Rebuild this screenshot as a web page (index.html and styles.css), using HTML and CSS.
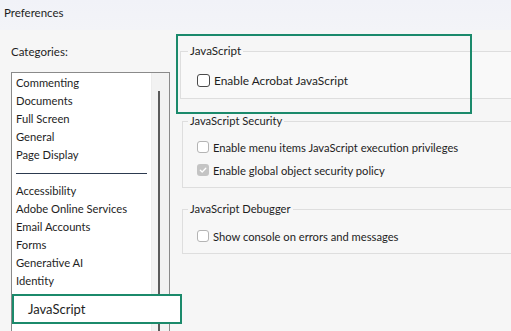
FILE: index.html
```html
<!DOCTYPE html>
<html>
<head>
<meta charset="utf-8">
<link rel="stylesheet" href="styles.css">
</head>
<body>
<div class="window">
  <header class="titlebar">Preferences</header>
  <div class="content">
    <aside class="sidebar">
      <div class="cat-label">Categories:</div>
      <div class="listbox">
        <ul class="list">
          <li>Commenting</li>
          <li>Documents</li>
          <li>Full Screen</li>
          <li>General</li>
          <li>Page Display</li>
          <li class="sep"><span></span></li>
          <li>Accessibility</li>
          <li>Adobe Online Services</li>
          <li>Email Accounts</li>
          <li>Forms</li>
          <li>Generative AI</li>
          <li>Identity</li>
        </ul>
        <div class="track"><div class="thumb"></div></div>
      </div>
    </aside>
    <main class="panel">
      <fieldset class="group g1">
        <legend>JavaScript</legend>
        <div class="row"><span class="cb"></span>Enable Acrobat JavaScript</div>
      </fieldset>
      <fieldset class="group g2">
        <legend>JavaScript Security</legend>
        <div class="row"><span class="cb light"></span>Enable menu items JavaScript execution privileges</div>
        <div class="row"><span class="cb checked"><svg viewBox="0 0 12 12" width="12" height="12"><path d="M3.3 6.2 L5.2 8 L8.8 4.3" fill="none" stroke="#fff" stroke-width="1.3" stroke-linecap="round" stroke-linejoin="round"/></svg></span>Enable global object security policy</div>
      </fieldset>
      <fieldset class="group g3">
        <legend>JavaScript Debugger</legend>
        <div class="row"><span class="cb light"></span>Show console on errors and messages</div>
      </fieldset>
    </main>
  </div>
  <div class="hl hl-item">JavaScript</div>
  <div class="hl hl-group"></div>
</div>
</body>
</html>
```
FILE: styles.css
```css
html, body {
  margin: 0;
  padding: 0;
}
body {
  width: 511px;
  height: 331px;
  overflow: hidden;
  background: #f6f6f6;
  font-family: Lato, "Noto Sans", sans-serif;
  font-size: 11.2px;
  color: #1e1e1e;
}
.window {
  position: relative;
  width: 511px;
  height: 331px;
  overflow: hidden;
}
.titlebar {
  height: 30px;
  box-sizing: border-box;
  padding: 6px 0 0 4px;
  line-height: 14px;
  font-size: 11.5px;
  background: linear-gradient(#f1f2f8, #f3f4f8);
}
.content {
  display: flex;
}
.sidebar {
  width: 176px;
  flex: none;
  padding-left: 11px;
  box-sizing: border-box;
}
.cat-label {
  margin-top: 15px;
  line-height: 14px;
  height: 14px;
  font-size: 11.5px;
}
.listbox {
  margin-top: 13px;
  width: 159px;
  height: 280px;
  box-sizing: border-box;
  border: 1px solid #8a8a8a;
  border-bottom: none;
  display: flex;
  background: #fff;
}
.list {
  list-style: none;
  margin: 0;
  padding: 1px 0 0 4px;
  flex: 1;
}
.list li {
  height: 18px;
  line-height: 18px;
  white-space: nowrap;
}
.list li.sep {
  display: flex;
  align-items: center;
}
.list li.sep span {
  display: block;
  width: 131px;
  height: 1px;
  background: #2c3a4f;
}
.track {
  width: 17px;
  flex: none;
  background: #f2f2f2;
  border-left: 1px solid #ececec;
}
.thumb {
  margin: 18px 0 0 6px;
  width: 2px;
  height: 240px;
  background: #5a5a5a;
}
.panel {
  flex: 1;
  padding-top: 14px;
  margin-right: -20px;
}
.group {
  margin: 0 0 0 6px;
  padding: 0 0 8px 0;
  border: 1px solid #dedede;
  background: #f7f7f7;
  min-width: 0;
}
.group.g1 {
  margin-left: 4px;
  padding-bottom: 9px;
  background: #f9f9f9;
}
.group.g2 {
  margin-top: 15px;
}
.group.g3 {
  margin-top: 14px;
}
.group legend {
  margin-left: 5px;
  padding: 0 2px;
  line-height: 14px;
  height: 14px;
}
.g1 legend {
  margin-left: 7px;
  font-size: 11.6px;
}
.row {
  display: flex;
  align-items: center;
  height: 18px;
  margin-left: 14px;
  white-space: nowrap;
}
.g1 .row { margin-top: 13px; margin-left: 16px; font-size: 11.9px; }
.g2 .row { margin-top: 5px; }
.g2 .row:first-of-type { margin-top: 10px; }
.g3 .row { margin-top: 11px; }
.cb {
  width: 13px;
  height: 13px;
  box-sizing: border-box;
  border: 1px solid #4a4a4a;
  border-radius: 3px;
  background: #fff;
  margin-right: 4px;
  flex: none;
  display: flex;
  align-items: center;
  justify-content: center;
}
.cb.light {
  width: 12px;
  height: 12px;
  border-color: #b4b4b4;
}
.cb.checked {
  width: 12px;
  height: 12px;
  border: none;
  background: #c4c4c4;
}
.hl {
  position: absolute;
  box-sizing: border-box;
  border: 2px solid #1b8a6b;
}
.hl-item {
  left: 12px;
  top: 294px;
  width: 170px;
  height: 30px;
  background: #fff;
  padding-left: 14px;
  line-height: 26px;
  font-size: 13px;
}
.hl-group {
  left: 176px;
  top: 34px;
  width: 296px;
  height: 80px;
}
```
